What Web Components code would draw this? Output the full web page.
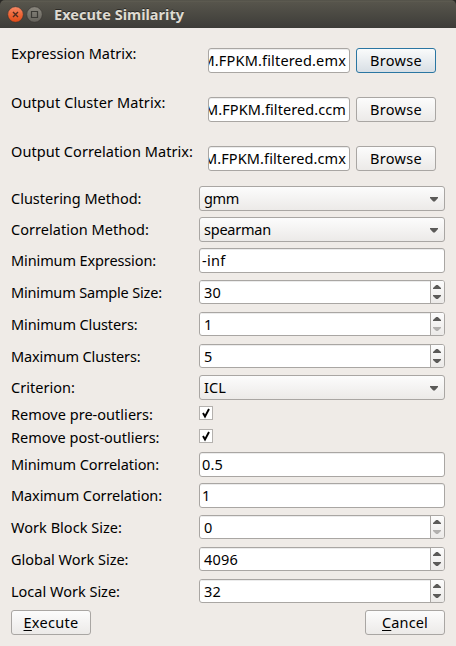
<!DOCTYPE html>
<html lang="en"><head><meta charset="utf-8"><title>Execute Similarity</title>
<style>
html,body{margin:0;padding:0}
body{width:456px;height:646px;overflow:hidden;background:#efebe7;font:14.5px/18px "Noto Sans","Open Sans",sans-serif;color:#000}
</style></head><body>
<similarity-dialog></similarity-dialog>
<script>
class UiElement extends HTMLElement{
  connectedCallback(){
    if(this.shadowRoot)return;
    this.attachShadow({mode:'open'}).innerHTML='<style>:host{box-sizing:border-box}*{box-sizing:border-box}'+this.css()+'</style>'+this.html();
  }
}
const frame='border:1px solid #a9a6a3;border-radius:3px;';
const face='background:linear-gradient(#fcfcfc,#eceae8);';

// A line of text whose tracking is adjusted to a given advance width.
customElements.define('fit-text',class extends UiElement{
  css(){return ':host{display:inline-block;white-space:pre;line-height:18px;flex:none}span{display:inline-block}'}
  html(){return '<span><slot></slot></span>'}
  connectedCallback(){
    super.connectedCallback();
    const w=+this.getAttribute('w'),n=this.textContent.length;
    if(!w||!n)return;
    const s=this.shadowRoot.querySelector('span');
    s.style.letterSpacing=((w-s.getBoundingClientRect().width)/n)+'px';
  }
});
customElements.define('title-bar',class extends UiElement{
  css(){return ':host{display:flex;align-items:center;height:28px;padding:0 8px 0 7px;background:linear-gradient(#4a4942 0,#615f54 1px,#57554c 2px,#3e3d39 27px,#3b3a36);border-radius:5px 5px 0 0;color:#dfdbd2;font-weight:700;text-shadow:0 -1px #2b2a27}svg{display:block;flex:none;margin-right:3px}.t{margin-left:8px;margin-top:-1px}'}
  html(){return `<svg width="17" height="18" viewBox="0 0 17 18"><defs><linearGradient id="a" x2="0" y2="1"><stop stop-color="#f58a68"/><stop offset=".5" stop-color="#ee6637"/><stop offset="1" stop-color="#df4b18"/></linearGradient></defs><circle cx="8.5" cy="9.5" r="7.8" fill="url(#a)" stroke="#35332f" stroke-width=".6"/><path d="M6 7l5 5M11 7l-5 5" stroke="#4e2c20" stroke-width="1.4"/></svg>
  <svg width="17" height="18" viewBox="0 0 17 18" style="margin-left:-1px"><defs><linearGradient id="b" x2="0" y2="1"><stop stop-color="#8a877e"/><stop offset="1" stop-color="#64625b"/></linearGradient></defs><circle cx="8.5" cy="9.5" r="7.8" fill="url(#b)" stroke="#35332f" stroke-width=".6"/><path d="M5.5 6.5h6v6h-6z" fill="none" stroke="#3b3a35" stroke-width="1.2"/></svg>
  <span class="t"><slot></slot></span>`}
});
customElements.define('push-button',class extends UiElement{
  css(){return `:host{display:flex;justify-content:center;width:80px;height:25px;padding-top:2px;flex:none;${frame}${face}}:host([focused]){border-color:#2a76a2;background:linear-gradient(#fafbfb,#d8dfe5)}`}
  html(){return '<slot></slot>'}
});
customElements.define('line-edit',class extends UiElement{
  css(){return `:host{display:flex;width:246px;height:25px;padding:2px 0 0 2px;overflow:hidden;background:#fff;box-shadow:inset 0 1px #ececec;${frame}}:host([file]){width:142px;justify-content:flex-end;padding-right:3px}`}
  html(){return '<slot></slot>'}
});
customElements.define('combo-box',class extends UiElement{
  css(){return `:host{display:flex;justify-content:space-between;width:246px;height:25px;padding:2px 6px 0 4px;${frame}${face}}svg{display:block;margin-top:8px}`}
  html(){return '<slot></slot><svg width="8" height="5"><path d="M0 0h8v1L4.8 4.4H3.2L0 1z" fill="#5b5a58"/></svg>'}
});
customElements.define('spin-box',class extends UiElement{
  css(){return `:host{display:flex;justify-content:space-between;width:246px;height:24px;overflow:hidden;background:#fff;${frame}}.v{padding:2px 0 0 4px;flex:1;box-shadow:inset 0 1px #ececec}.b{width:14px;height:22px;border-left:1px solid #a9a6a3;${face}}svg{display:block}.d{fill:#5b5a58}:host([min]) .d{fill:#b2b0ae}`}
  html(){return '<div class="v"><slot></slot></div><div class="b"><svg width="13" height="22"><path d="M2 8V7L5.2 4h1.6L10 7v1z" fill="#5b5a58"/><path class="d" d="M2 14v1l3.2 3h1.6L10 15v-1z"/></svg></div>'}
});
customElements.define('check-box',class extends UiElement{
  css(){return ':host{display:block;width:14px;height:14px;border:1px solid #b4b1ae;background:#fff}svg{display:block}'}
  html(){return '<svg width="12" height="12"><path d="M3 6l2 3.5L9 2" fill="none" stroke="#000" stroke-width="1.9"/></svg>'}
});
customElements.define('form-row',class extends UiElement{
  css(){return ':host{display:grid;grid-template-columns:188px auto;align-items:start;justify-content:start}.l{margin-top:3px;height:0}:host([file]) .l{margin-top:-4px}:host([check]) .l{margin-top:-1px}.f{display:flex;gap:6px}:host([file]) .f{margin-left:9px}'}
  html(){return '<div class="l"><slot name="label"></slot></div><div class="f"><slot></slot></div>'}
});
customElements.define('similarity-dialog',class extends UiElement{
  css(){return ':host{display:block;width:456px;height:646px;background:linear-gradient(#292825 6px,#efebe7 6px)}main{display:flex;flex-direction:column;padding:20px 11px 0}footer{display:flex;justify-content:space-between;margin-top:7px}u{text-decoration:underline;text-decoration-thickness:1px;text-underline-offset:2px;text-decoration-skip-ink:none}'}
  html(){
    const t=(s,w)=>`<fit-text w="${w}">${s}</fit-text>`;
    const row=(gap,label,lw,kind,value,vw,attr='')=>{
      const file=kind==='file',tag=file?'line-edit':kind;
      return `<form-row style="margin-top:${gap}px" ${file?'file':kind==='check-box'?'check':''}><fit-text slot="label" w="${lw}">${label}</fit-text><${tag} ${file?'file':attr}>${value?t(value,vw):''}</${tag}>${file?`<push-button ${attr}>${t('Browse',52)}</push-button>`:''}</form-row>`};
    return `<title-bar>${t('Execute Similarity',130)}</title-bar><main>`+
    row(0,'Expression Matrix:',125.5,'file','M.FPKM.filtered.emx',144.5,'focused')+
    row(24,'Output Cluster Matrix:',154.5,'file','M.FPKM.filtered.ccm',141)+
    row(24,'Output Correlation Matrix:',182,'file','M.FPKM.filtered.cmx',142)+
    row(15,'Clustering Method:',130.5,'combo-box','gmm',35)+
    row(6,'Correlation Method:',138,'combo-box','spearman',67)+
    row(6,'Minimum Expression:',145,'line-edit','-inf',23.5)+
    row(7,'Minimum Sample Size:',151,'spin-box','30',17)+
    row(8,'Minimum Clusters:',126.5,'spin-box','1',8.5,'min')+
    row(8,'Maximum Clusters:',129.5,'spin-box','5',8.5)+
    row(7,'Criterion:',64,'combo-box','ICL',22)+
    row(6,'Remove pre-outliers:',142,'check-box','',0)+
    row(9,'Remove post-outliers:',148.5,'check-box','',0)+
    row(9,'Minimum Correlation:',148,'line-edit','0.5',21)+
    row(6,'Maximum Correlation:',151,'line-edit','1',8.5)+
    row(7,'Work Block Size:',111,'spin-box','0',8.5,'min')+
    row(8,'Global Work Size:',117.5,'spin-box','4096',34)+
    row(8,'Local Work Size:',109,'spin-box','32',17)+
    `<footer><push-button>${t('<u>E</u>xecute',55)}</push-button><push-button>${t('<u>C</u>ancel',46)}</push-button></footer></main>`}
});
</script></body></html>
